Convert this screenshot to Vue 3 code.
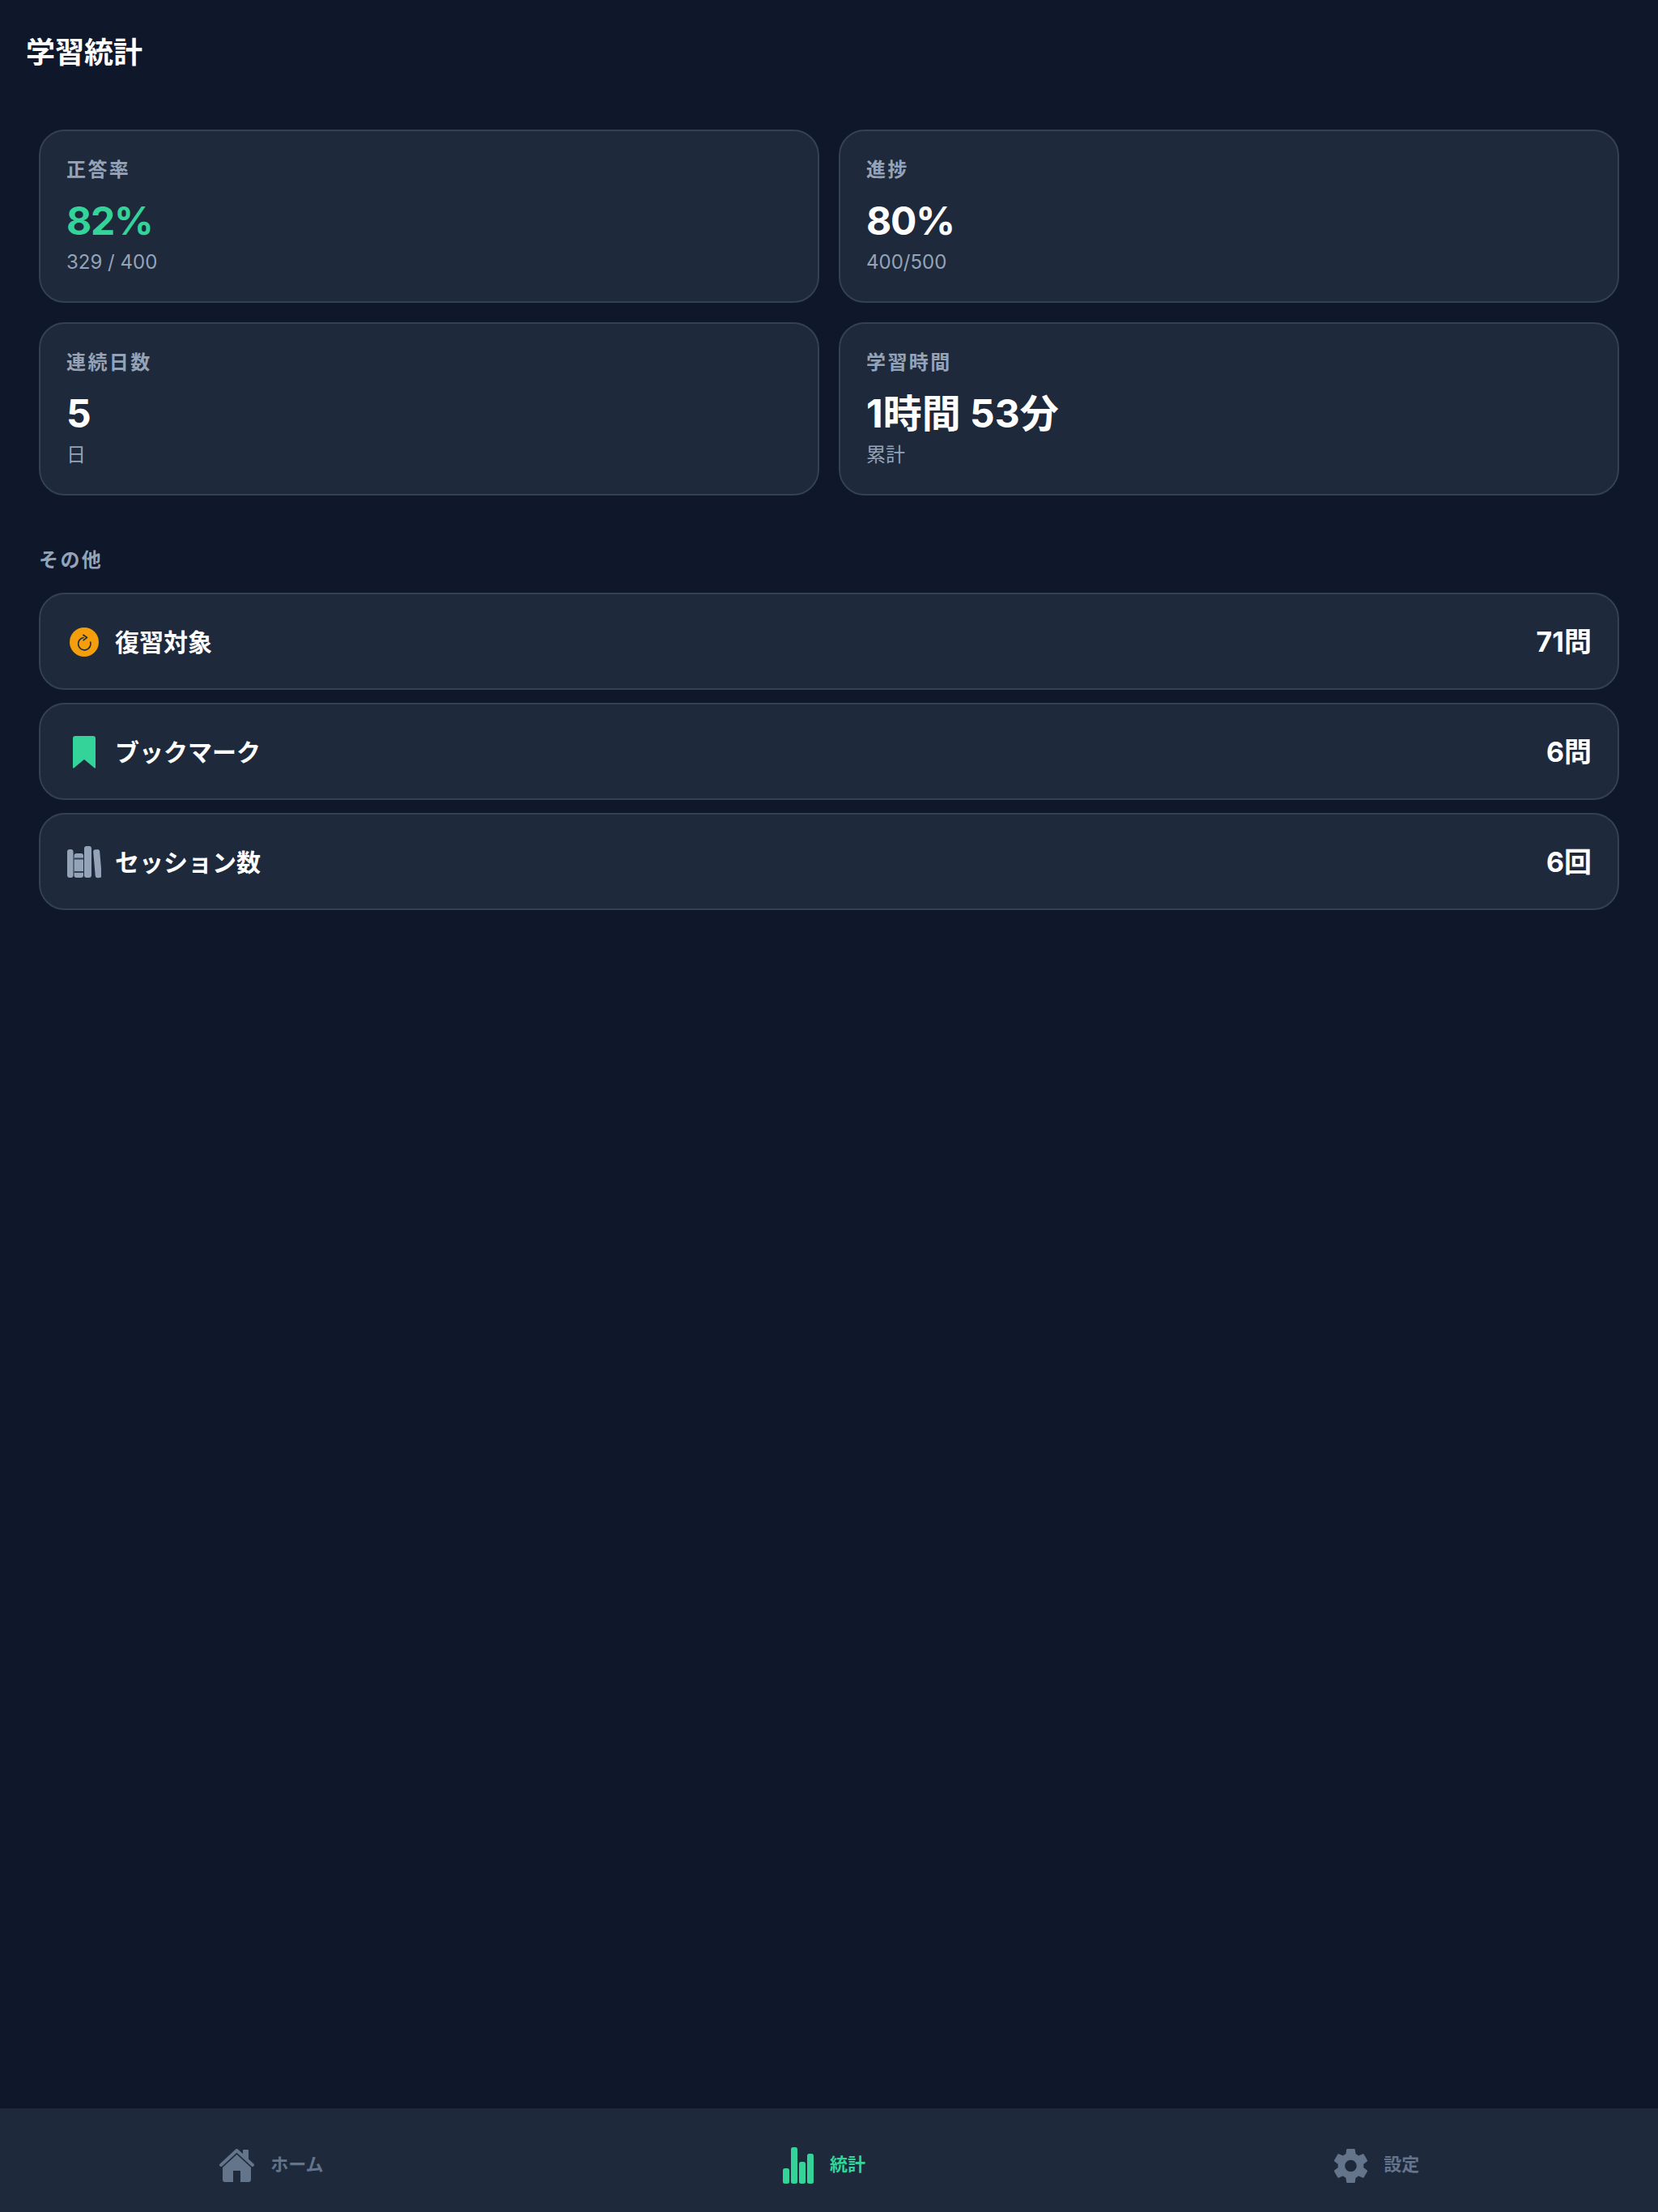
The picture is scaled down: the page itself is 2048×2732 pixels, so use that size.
<script setup>
const stats = [
  { label: "正答率", value: "82%", sub: "329 / 400", accent: true },
  { label: "進捗", value: "80%", sub: "400/500" },
  { label: "連続日数", value: "5", sub: "日" },
  { label: "学習時間", value: "1時間 53分", sub: "累計", loose: true }
];

const others = [
  { key: "review", label: "復習対象", value: "71問" },
  { key: "bookmark", label: "ブックマーク", value: "6問" },
  { key: "session", label: "セッション数", value: "6回" }
];
</script>

<template>
  <div class="page">
    <header class="topbar">
      <h1>学習統計</h1>
    </header>

    <main class="content">
      <section class="stat-grid">
        <div v-for="stat in stats" :key="stat.label" class="stat-card">
          <p class="stat-label">{{ stat.label }}</p>
          <p class="stat-value" :class="{ accent: stat.accent, loose: stat.loose }">{{ stat.value }}</p>
          <p class="stat-sub">{{ stat.sub }}</p>
        </div>
      </section>

      <h2 class="section-title">その他</h2>
      <section class="rows">
        <div v-for="row in others" :key="row.key" class="row">
          <span class="row-icon">
            <svg v-if="row.key === 'review'" width="36" height="36" viewBox="0 0 36 36">
              <circle cx="18" cy="18" r="18" fill="#f59e0b" />
              <path d="M17 12.500A7.700 7.700 0 1 0 25.700 18" fill="none" stroke="#1e293b" stroke-width="1.700" stroke-linecap="round" />
              <path d="M16.900 9.300l4.600 3.100-4.300 3.300" fill="none" stroke="#1e293b" stroke-width="1.700" stroke-linecap="round" stroke-linejoin="round" />
            </svg>
            <svg v-else-if="row.key === 'bookmark'" width="28" height="40" viewBox="0 0 28 40">
              <path d="M3 0h22a3 3 0 0 1 3 3v36a.8.8 0 0 1-1.300.6L14 29 1.300 39.600A.8.8 0 0 1 0 39V3a3 3 0 0 1 3-3z" fill="#34d399" />
            </svg>
            <svg v-else width="42" height="40" viewBox="0 0 42 40">
              <rect x="0" y="4" width="7.500" height="35" rx="3" fill="#94a3b8" />
              <rect x="8.500" y="9" width="11.500" height="30" rx="3" fill="#94a3b8" />
              <rect x="8.500" y="14.500" width="11.500" height="2" fill="#334155" />
              <rect x="8.500" y="31" width="11.500" height="2" fill="#334155" />
              <rect x="21" y="0" width="9" height="39" rx="3" fill="#94a3b8" />
              <rect x="33.500" y="4.200" width="8" height="35" rx="3" fill="#94a3b8" transform="rotate(-5 37 22)" />
            </svg>
          </span>
          <span class="row-label">{{ row.label }}</span>
          <span class="row-value">{{ row.value }}</span>
        </div>
      </section>
    </main>

    <nav class="tabbar">
      <a class="tab">
        <svg width="43" height="41" viewBox="0 0 43 41">
          <path d="M2 20 21.500 2 41 20" fill="none" stroke="#64748b" stroke-width="4" stroke-linecap="round" stroke-linejoin="round" />
          <path d="M29 2a1 1 0 0 1 1-1h5a1 1 0 0 1 1 1v13l-7-6z" fill="#64748b" />
          <path d="M21.500 7 39 23v15a3 3 0 0 1-3 3H26V27h-9v14H7a3 3 0 0 1-3-3V23z" fill="#64748b" />
        </svg>
        <span>ホーム</span>
      </a>
      <a class="tab active">
        <svg width="38" height="45" viewBox="0 0 38 45">
          <rect x="0" y="26" width="8" height="19" rx="2.500" fill="#34d399" />
          <rect x="10" y="0" width="8" height="45" rx="2.500" fill="#34d399" />
          <rect x="20" y="18" width="8" height="27" rx="2.500" fill="#34d399" />
          <rect x="30" y="8" width="8" height="37" rx="2.500" fill="#34d399" />
        </svg>
        <span>統計</span>
      </a>
      <a class="tab">
        <svg width="41" height="44" viewBox="2.700 2 18.600 20">
          <path d="M19.140 12.940c.04-.3.060-.61.060-.94 0-.32-.020-.64-.070-.94l2.030-1.580a.49.49 0 0 0 .12-.61l-1.920-3.320a.488.488 0 0 0-.59-.22l-2.390.96c-.5-.38-1.030-.7-1.620-.94l-.36-2.540a.484.484 0 0 0-.48-.41h-3.840c-.24 0-.43.17-.47.41l-.36 2.540c-.59.24-1.130.57-1.620.94l-2.390-.96c-.22-.08-.47 0-.59.22L2.740 8.870c-.12.21-.08.47.12.61l2.030 1.580c-.05.3-.09.63-.09.94s.020.64.070.94l-2.030 1.580a.49.49 0 0 0-.12.61l1.920 3.320c.12.22.37.29.59.22l2.390-.96c.5.38 1.030.7 1.620.94l.36 2.540c.05.24.24.41.48.41h3.840c.24 0 .44-.17.47-.41l.36-2.540c.59-.24 1.130-.56 1.620-.94l2.390.96c.22.08.47 0 .59-.22l1.920-3.320c.12-.22.070-.47-.12-.61l-2.010-1.580zM12 15.300c-1.820 0-3.300-1.480-3.300-3.300s1.480-3.300 3.300-3.300 3.300 1.480 3.300 3.300-1.480 3.300-3.300 3.300z" fill="#64748b" />
        </svg>
        <span>設定</span>
      </a>
    </nav>
  </div>
</template>

<style>
html,
body {
  margin: 0;
  background: #0f172a;
}
</style>

<style scoped>
* {
  box-sizing: border-box;
}

.page {
  height: 2732px;
  display: flex;
  flex-direction: column;
  background: #0f172a;
  color: #fff;
  font-family: Inter, "Noto Sans CJK JP", sans-serif;
}

.topbar {
  padding: 41px 32px 0;
  height: 112px;
}

h1 {
  margin: 0;
  font-size: 36px;
  line-height: 48px;
  font-weight: 700;
}

.content {
  flex: 1;
  padding: 48px 48px 0;
}

.stat-grid {
  display: grid;
  grid-template-columns: 1fr 1fr;
  gap: 24px;
}

.stat-card {
  height: 214px;
  padding: 32px 32px;
  background: #1e293b;
  border: 2px solid #334155;
  border-radius: 32px;
}

.stat-card p {
  margin: 0;
}

.stat-label {
  font-size: 24px;
  line-height: 32px;
  font-weight: 600;
  letter-spacing: 2.4px;
  color: #94a3b8;
}

.stat-card .stat-value {
  margin-top: 15px;
  font-size: 48px;
  line-height: 64px;
  font-weight: 700;
  letter-spacing: -1.2px;
}

.stat-card .stat-value.accent {
  color: #34d399;
}

.stat-card .stat-value.loose {
  letter-spacing: 0;
}

.stat-card .stat-sub {
  margin-top: 1px;
  font-size: 24px;
  line-height: 36px;
  color: #94a3b8;
}

.section-title {
  margin: 64px 0 24px;
  font-size: 24px;
  line-height: 32px;
  font-weight: 600;
  letter-spacing: 2.4px;
  color: #94a3b8;
}

.rows {
  display: flex;
  flex-direction: column;
  gap: 16px;
}

.row {
  height: 120px;
  display: flex;
  align-items: center;
  gap: 16px;
  padding: 0 32px;
  background: #1e293b;
  border: 2px solid #334155;
  border-radius: 32px;
}

.row-icon {
  width: 44px;
  padding-top: 2px;
  display: flex;
  align-items: center;
  justify-content: center;
}

.row-label {
  flex: 1;
  padding-bottom: 3px;
  font-size: 30px;
  font-weight: 600;
}

.row-value {
  padding-bottom: 4px;
  font-size: 34px;
  font-weight: 700;
}

.tabbar {
  height: 128px;
  display: grid;
  grid-template-columns: repeat(3, 1fr);
  background: #1e293b;
}

.tab {
  display: flex;
  align-items: center;
  justify-content: center;
  gap: 20px;
  padding: 6px 12px 0 0;
  font-size: 22px;
  font-weight: 600;
  color: #64748b;
}

.tab svg {
  margin-top: 7px;
}

.tab.active {
  color: #34d399;
}
</style>
